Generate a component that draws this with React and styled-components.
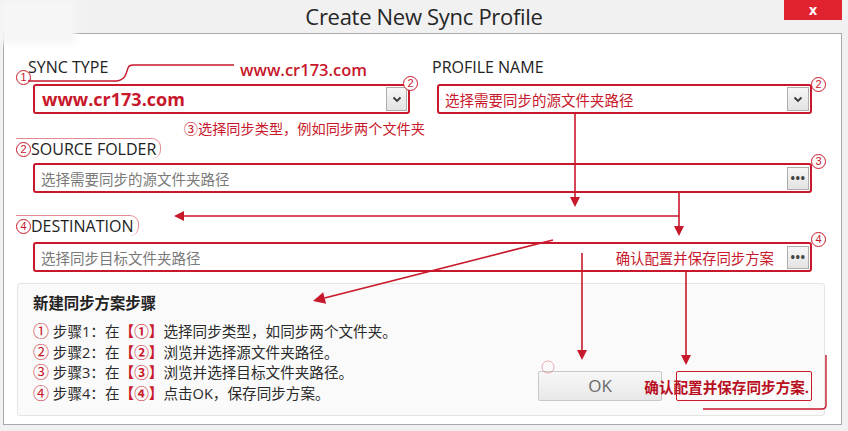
import React from "react";
import styled, { createGlobalStyle } from "styled-components";

const RED = "#c8182b";
const FONT = `"Open Sans", "Noto Sans CJK SC", sans-serif`;

const GlobalStyle = createGlobalStyle`
  body {
    margin: 0;
    background: #f1f1f1;
    font-family: ${FONT};
  }
`;

const Screen = styled.div`
  position: relative;
  width: 848px;
  height: 431px;
  overflow: hidden;
  background: #f1f1f1;
`;

const TitleBar = styled.div`
  display: grid;
  grid-template-columns: 1fr auto 1fr;
  height: 33px;
`;

const Title = styled.div`
  grid-column: 2;
  font-size: 22px;
  line-height: 33px;
  color: #262626;
  letter-spacing: -0.3px;
`;

const CloseButton = styled.div`
  justify-self: end;
  align-self: start;
  width: 58px;
  height: 20px;
  margin-right: 6px;
  background: #e0232f;
  color: #fff;
  font-size: 14px;
  font-weight: 700;
  line-height: 19px;
  text-align: center;
`;

const Panel = styled.div`
  box-sizing: border-box;
  display: flex;
  flex-direction: column;
  height: 392px;
  margin: 0 6px 0 3px;
  padding: 0 29px 0 29px;
  background: #fff;
  border: 1px solid #a9a9a9;
`;

const TopGrid = styled.div`
  display: grid;
  grid-template-columns: 377px 375px;
  column-gap: 27px;
  padding-top: 23px;
`;

const Column = styled.div`
  display: flex;
  flex-direction: column;
`;

const Label = styled.div`
  position: relative;
  align-self: flex-start;
  margin-left: -5px;
  font-size: 16px;
  line-height: 20px;
  color: #222;
`;

const CircleLabel = styled.div`
  display: flex;
  align-items: center;
  align-self: flex-start;
  margin-left: -17px;
  margin-top: ${(p) => p.$top}px;
  padding-right: 4px;
  font-size: 16px;
  line-height: 20px;
  color: #222;
  border-top: 1px solid rgba(200, 24, 43, 0.5);
  border-right: 1px solid rgba(200, 24, 43, 0.5);
  border-radius: 0 9px 9px 0;
`;

const Badge = styled.span`
  box-sizing: border-box;
  display: inline-flex;
  align-items: center;
  justify-content: center;
  width: 15px;
  height: 15px;
  border: 1.3px solid ${RED};
  border-radius: 50%;
  background: #fff;
  color: ${RED};
  font-size: 11px;
  line-height: 1;
  font-family: "Liberation Sans", sans-serif;
  ${(p) =>
    p.$float &&
    `position: absolute; top: ${p.$top}px; right: ${p.$right}px; left: ${p.$left ?? "auto"};`}
`;

const Field = styled.div`
  position: relative;
  box-sizing: border-box;
  display: flex;
  align-items: center;
  height: 30px;
  margin-top: ${(p) => p.$top}px;
  padding: 0 1px 0 ${(p) => (p.$bold ? 7 : 6)}px;
  border: 2px solid ${RED};
  border-radius: 3px;
  background: #fff;
`;

const FieldText = styled.span`
  flex: 1;
  font-size: ${(p) => (p.$bold ? "18px" : "14.5px")};
  font-weight: ${(p) => (p.$bold ? 700 : 400)};
  color: ${(p) => (p.$muted ? "#7a7a7a" : RED)};
  white-space: nowrap;
`;

const Note = styled.span`
  margin-right: 13px;
  font-size: 14.4px;
  color: ${RED};
`;

const SideButton = styled.div`
  box-sizing: border-box;
  display: flex;
  align-items: center;
  justify-content: center;
  width: ${(p) => p.$w}px;
  height: ${(p) => p.$h}px;
  border: 1px solid #adadad;
  background: linear-gradient(#f7f7f7, #e3e3e3);
  color: #444;
  font-size: 12px;
  font-weight: 700;
  letter-spacing: 0.5px;
`;

const Hint = styled.div`
  margin: 6px -15px 0 0;
  font-size: 14.2px;
  line-height: 18px;
  color: ${RED};
  text-align: right;
  white-space: nowrap;
`;

const StepsBox = styled.div`
  box-sizing: border-box;
  display: flex;
  justify-content: space-between;
  height: 133px;
  margin: 11px -13px 0 -16px;
  padding: 10px 12px 14px 15px;
  background: #fafafa;
  border: 1px solid #e4e4e4;
  border-radius: 3px;
`;

const StepsTitle = styled.div`
  font-size: 15.4px;
  font-weight: 700;
  line-height: 20px;
  color: #222;
`;

const StepList = styled.ol`
  margin: 7px 0 0 0;
  padding: 0;
  list-style: none;
`;

const Step = styled.li`
  font-size: 14.6px;
  line-height: 20.6px;
  color: #2a2a2a;
  white-space: nowrap;
`;

const Red = styled.span`
  color: ${RED};
  font-weight: ${(p) => (p.$bold ? 700 : 400)};
  font-size: ${(p) => (p.$big ? "16px" : "inherit")};
`;

const Actions = styled.div`
  display: flex;
  align-self: flex-end;
  gap: 14px;
`;

const OkButton = styled.div`
  box-sizing: border-box;
  width: 124px;
  height: 30px;
  border: 1px solid #c8c8c8;
  border-radius: 2px;
  background: linear-gradient(#f7f7f7, #e8e8e8);
  color: #6a6a6a;
  font-size: 17px;
  line-height: 28px;
  text-align: center;
`;

const ConfirmBox = styled.div`
  box-sizing: border-box;
  display: flex;
  justify-content: flex-end;
  align-items: center;
  width: 136px;
  height: 30px;
  padding-right: 2px;
  border: 1.5px solid ${RED};
  border-radius: 2px;
  color: #b8101f;
  font-size: 14.6px;
  font-weight: 700;
  white-space: nowrap;
`;

const Overlay = styled.svg`
  position: absolute;
  top: 0;
  left: 0;
  pointer-events: none;
`;

const Smudge = styled.div`
  position: absolute;
  top: 0;
  left: 0;
  width: 76px;
  height: 44px;
  background: #f6f6f6;
  filter: blur(3px);
`;

const TopLink = styled.div`
  position: absolute;
  top: 58px;
  left: 240px;
  font-size: 16.5px;
  font-weight: 600;
  color: ${RED};
`;

const Chevron = () => (
  <svg width="10" height="7" viewBox="0 0 10 7">
    <path d="M1.5 1.5 L5 5 L8.5 1.5" fill="none" stroke="#3a3a3a" strokeWidth="1.8" />
  </svg>
);

const Arrow = ({ x1, y1, x2, y2, size = 10 }) => {
  const a = Math.atan2(y2 - y1, x2 - x1);
  const bx = x2 - Math.cos(a) * size;
  const by = y2 - Math.sin(a) * size;
  const w = size * 0.5;
  const px = -Math.sin(a) * w;
  const py = Math.cos(a) * w;
  return (
    <g>
      <line x1={x1} y1={y1} x2={bx} y2={by} stroke={RED} strokeWidth="1.6" />
      <polygon points={`${x2},${y2} ${bx + px},${by + py} ${bx - px},${by - py}`} fill={RED} />
    </g>
  );
};

const steps = [
  { n: "①", k: "1", t: "选择同步类型，如同步两个文件夹。" },
  { n: "②", k: "2", t: "浏览并选择源文件夹路径。" },
  { n: "③", k: "3", t: "浏览并选择目标文件夹路径。" },
  { n: "④", k: "4", t: "点击OK，保存同步方案。" },
];

export default function App() {
  return (
    <Screen>
      <GlobalStyle />
      <TitleBar>
        <Title>Create New Sync Profile</Title>
        <CloseButton>x</CloseButton>
      </TitleBar>

      <Panel>
        <TopGrid>
          <Column>
            <Label>
              SYNC TYPE
              <Badge $float $top={13} $right="auto" $left="-12px">1</Badge>
            </Label>
            <Field $top={7} $bold>
              <FieldText $bold>www.cr173.com</FieldText>
              <SideButton $w={21} $h={24}>
                <Chevron />
              </SideButton>
              <Badge $float $top={-10} $right={-10}>2</Badge>
            </Field>
            <Hint>③选择同步类型，例如同步两个文件夹</Hint>
          </Column>
          <Column>
            <Label>PROFILE NAME</Label>
            <Field $top={7}>
              <FieldText>选择需要同步的源文件夹路径</FieldText>
              <SideButton $w={22} $h={24}>
                <Chevron />
              </SideButton>
              <Badge $float $top={-9} $right={-16}>2</Badge>
            </Field>
          </Column>
        </TopGrid>

        <CircleLabel $top={0}>
          <Badge>2</Badge>SOURCE FOLDER
        </CircleLabel>
        <Field $top={4}>
          <FieldText $muted>选择需要同步的源文件夹路径</FieldText>
          <SideButton $w={22} $h={23}>•••</SideButton>
          <Badge $float $top={-11} $right={-16}>3</Badge>
        </Field>

        <CircleLabel $top={22}>
          <Badge>4</Badge>DESTINATION
        </CircleLabel>
        <Field $top={6}>
          <FieldText $muted>选择同步目标文件夹路径</FieldText>
          <Note>确认配置并保存同步方案</Note>
          <SideButton $w={22} $h={23}>•••</SideButton>
          <Badge $float $top={-12} $right={-16}>4</Badge>
        </Field>

        <StepsBox>
          <div>
            <StepsTitle>新建同步方案步骤</StepsTitle>
            <StepList>
              {steps.map((s) => (
                <Step key={s.k}>
                  <Red $big>{s.n}</Red> 步骤{s.k}：在<Red $bold>【{s.n}】</Red>
                  {s.t}
                </Step>
              ))}
            </StepList>
          </div>
          <Actions>
            <OkButton>OK</OkButton>
            <ConfirmBox>确认配置并保存同步方案.</ConfirmBox>
          </Actions>
        </StepsBox>
      </Panel>

      <Smudge />
      <TopLink>www.cr173.com</TopLink>

      <Overlay width="848" height="431" viewBox="0 0 848 431">
        <path
          d="M28 81 L117 81 Q124 80 126 74 L128 68 Q129 65 133 65 L234 65"
          fill="none"
          stroke={RED}
          strokeWidth="1.4"
        />
        <Arrow x1={575} y1={114} x2={575} y2={207} />
        <line x1={679} y1={192} x2={679} y2={216} stroke={RED} strokeWidth="1.6" />
        <Arrow x1={679} y1={216} x2={679} y2={236} />
        <Arrow x1={679} y1={216} x2={174} y2={216} />
        <Arrow x1={553} y1={240} x2={313} y2={301} size={12} />
        <Arrow x1={582} y1={253} x2={582} y2={360} />
        <Arrow x1={686} y1={270} x2={686} y2={365} />
        <path
          d="M703 409 L822 409 Q826 409 826 405 L826 355"
          fill="none"
          stroke={RED}
          strokeWidth="1.4"
        />
        <circle cx="548" cy="367" r="6" fill="none" stroke={RED} strokeOpacity="0.35" strokeWidth="1" />
      </Overlay>
    </Screen>
  );
}
